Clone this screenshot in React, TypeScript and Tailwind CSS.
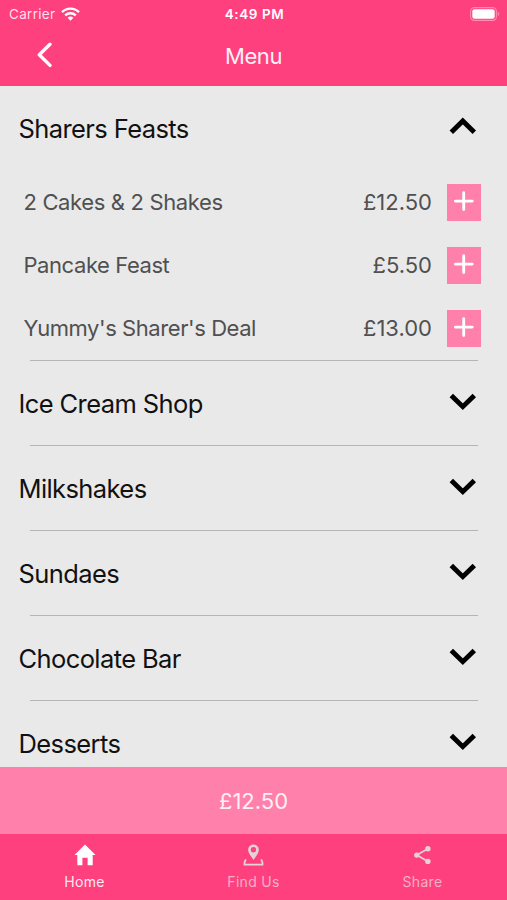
type Item = { name: string; price: string; tracking: string };

const items: Item[] = [
  { name: "2 Cakes & 2 Shakes", price: "£12.50", tracking: "tracking-[-0.36px]" },
  { name: "Pancake Feast", price: "£5.50", tracking: "tracking-[-0.43px]" },
  { name: "Yummy's Sharer's Deal", price: "£13.00", tracking: "tracking-[-0.43px]" },
];

const sections = ["Ice Cream Shop", "Milkshakes", "Sundaes", "Chocolate Bar", "Desserts"];

function Chevron({ up = false }: { up?: boolean }) {
  return (
    <svg width="28" height="18" viewBox="0 0 28 18" fill="none" stroke="#000" strokeWidth="4.9" className="shrink-0">
      <path d={up ? "M2.3 15.2 L13.8 4 L25.3 15.2" : "M2.3 2.5 L13.8 13.7 L25.3 2.5"} />
    </svg>
  );
}

function SectionTitle({ title, open = false }: { title: string; open?: boolean }) {
  return (
    <div className={`flex shrink-0 items-center justify-between pl-[18.5px] pr-[30px] ${open ? "h-[85px]" : "h-[84px] pt-px"}`}>
      <h2 className="text-[25.5px] leading-[30px] tracking-[-0.6px] text-[#111] whitespace-nowrap">{title}</h2>
      <div className={open ? "pb-[5px]" : "pb-1"}><Chevron up={open} /></div>
    </div>
  );
}

function Divider() {
  return <div className="ml-[30px] mr-[29px] h-px shrink-0 bg-[#b5b5b5]" />;
}

function StatusBar() {
  return (
    <div className="grid h-[27px] grid-cols-3 items-center pl-[9px] pr-[7px] text-[13.5px] leading-4 text-white">
      <div className="flex items-center gap-1.5">
        <span className="tracking-[0.3px] text-[#ffdfea]">Carrier</span>
        <svg width="19" height="14" viewBox="0 0 19 14" fill="none" stroke="#fff" strokeWidth="2.4">
          <path d="M1 5.1 C5.8 0.4 13.2 0.4 18 5.1" />
          <path d="M4.2 8.3 C7.2 5.5 11.8 5.5 14.8 8.3" />
          <path d="M6.6 10.7 Q9.5 8.3 12.4 10.7 L9.5 13.7Z" fill="#fff" stroke="none" />
        </svg>
      </div>
      <span className="text-center font-semibold tracking-[0.6px]">4:49 PM</span>
      <svg className="justify-self-end" width="30" height="14" viewBox="0 0 30 14">
        <rect x="0.6" y="0.6" width="25.8" height="12.8" rx="3.8" fill="none" stroke="#ff8db3" strokeWidth="1.1" />
        <rect x="2.3" y="2.3" width="22.4" height="9.4" rx="2.2" fill="#fff" />
        <path d="M27.8 4.8 Q30.6 7 27.8 9.2Z" fill="#ff8db3" />
      </svg>
    </div>
  );
}

function HomeIcon() {
  return (
    <svg width="22" height="22" viewBox="0 0 22 22" fill="#fff">
      <path d="M11 0.5 L21.5 11 H18.7 V21.3 H13.6 V13.7 H8.4 V21.3 H3.3 V11 H0.5Z" />
    </svg>
  );
}

function PinIcon() {
  return (
    <svg width="22" height="22" viewBox="0 0 22 22" fill="#e3d3d9">
      <path fillRule="evenodd" d="M10.5 0.5 C7.4 0.5 5.2 2.8 5.2 5.8 C5.2 9.4 8.1 12.2 10.5 16 C12.9 12.2 15.8 9.4 15.8 5.8 C15.8 2.8 13.6 0.5 10.5 0.5Z M10.5 3 A2.7 2.7 0 1 1 10.5 8.4 A2.7 2.7 0 1 1 10.5 3Z" />
      <path d="M2.8 15.4 L1.5 18.6 V20.6 H19.5 V18.6 L18.2 15.4" fill="none" stroke="#e3d3d9" strokeWidth="1.8" />
    </svg>
  );
}

function ShareIcon() {
  return (
    <svg width="22" height="22" viewBox="0 0 22 22" fill="#e3d3d9">
      <path d="M15.9 4.8 L4.8 11.1 L15.9 17.4" fill="none" stroke="#e3d3d9" strokeWidth="1.7" />
      <circle cx="15.9" cy="4.8" r="2.7" />
      <circle cx="4.8" cy="11.1" r="2.7" />
      <circle cx="15.9" cy="17.4" r="2.7" />
    </svg>
  );
}

const tabs = [
  { label: "Home", icon: <HomeIcon />, color: "text-[#ffe9f0]" },
  { label: "Find Us", icon: <PinIcon />, color: "text-[#f3b0c6]" },
  { label: "Share", icon: <ShareIcon />, color: "text-[#f3b0c6]" },
];

export default function App() {
  return (
    <div className="flex h-[900px] w-[507px] flex-col overflow-hidden bg-[#e9e9e9] font-['Inter',sans-serif]">
      <header className="h-[86px] shrink-0 bg-[#ff407f]">
        <StatusBar />
        <div className="grid h-[58px] grid-cols-3 items-center">
          <button className="ml-9 w-4 pb-[3px]" aria-label="Back">
            <svg width="16" height="26" viewBox="0 0 16 26" fill="none" stroke="#fff" strokeWidth="3.4" strokeLinecap="round" strokeLinejoin="round">
              <path d="M14 2.3 L3.3 12.8 L14 23.4" />
            </svg>
          </button>
          <h1 className="text-center text-[22px] leading-7 tracking-[-0.4px] text-[#fff0f5]">Menu</h1>
        </div>
      </header>

      <main className="flex min-h-0 flex-1 flex-col overflow-hidden">
        <SectionTitle title="Sharers Feasts" open />
        {items.map((item) => (
          <div key={item.name} className="flex h-[63px] shrink-0 items-center pl-[23.5px] pr-[26px] text-[22px] leading-7 text-[#505050]">
            <span className={`flex-1 pb-0.5 whitespace-nowrap ${item.tracking}`}>{item.name}</span>
            <span className="mr-[15px] pb-0.5">{item.price}</span>
            <button className="flex h-[37px] w-[34px] items-start justify-center bg-[#ff80aa] pt-[7px]" aria-label="Add">
              <svg width="20" height="20" viewBox="0 0 20 20" stroke="#fff" strokeWidth="2.9" strokeLinecap="round">
                <path d="M9.7 1.7 V18.5 M1.4 10.1 H18.2" />
              </svg>
            </button>
          </div>
        ))}
        {sections.map((title) => (
          <div key={title} className="shrink-0">
            <Divider />
            <SectionTitle title={title} />
          </div>
        ))}
      </main>

      <div className="flex h-[67px] shrink-0 items-center justify-center bg-[#ff80aa] text-[22px] leading-7 text-[#fff0f5]">
        £12.50
      </div>
      <nav className="grid h-[66px] shrink-0 grid-cols-3 bg-[#ff407f]">
        {tabs.map((tab) => (
          <div key={tab.label} className="flex flex-col items-center pt-[10px]">
            {tab.icon}
            <span className={`mt-2 text-[14px] leading-4 tracking-[0.3px] ${tab.color}`}>{tab.label}</span>
          </div>
        ))}
      </nav>
    </div>
  );
}
